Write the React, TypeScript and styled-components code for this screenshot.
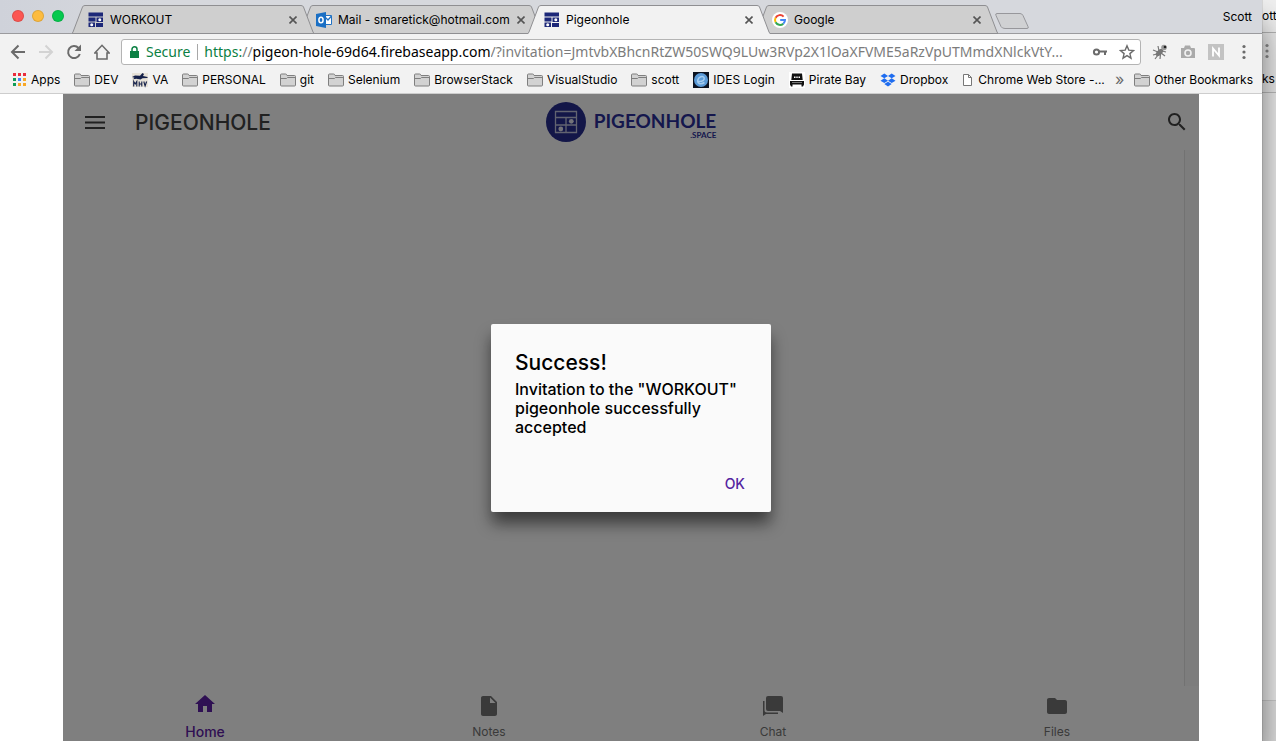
import React from 'react';
import styled, { createGlobalStyle, css } from 'styled-components';

const UI_FONT = `Inter, Roboto, "Liberation Sans", sans-serif`;

const GlobalStyle = createGlobalStyle`
  *, *::before, *::after { box-sizing: border-box; }
  body { margin: 0; background: #e4e4e4; font-family: ${UI_FONT}; color: #000; overflow: hidden; }
  button, input { font: inherit; color: inherit; border: 0; padding: 0; margin: 0; background: none; }
  button { cursor: pointer; }
  svg { display: block; flex: none; }
  a { color: inherit; text-decoration: none; }
  ul { list-style: none; margin: 0; padding: 0; }
`;

/* ---------- desktop ---------- */

const Desktop = styled.div`
  display: grid;
  grid-template-columns: minmax(0, 1fr) 14px;
  min-height: 100vh;
`;

const Window = styled.div`
  display: flex;
  flex-direction: column;
  position: relative;
  z-index: 1;
  background: #fff;
  box-shadow: 0 0 1px rgba(0, 0, 0, 0.5), 0 24px 32px rgba(0, 0, 0, 0.55);
`;

/* ---------- tab strip ---------- */

const TitleBar = styled.div`
  display: flex;
  height: 34px;
  background: linear-gradient(90deg, #cfd2da, #d6d8dd 12%, #d6d8dd);
  box-shadow: inset 0 -1px #9b9b9e;
`;

const Lights = styled.div`
  display: flex;
  gap: 8px;
  padding: 10px 8px 0 12px;
  width: 72px;
  flex: none;
`;

const Light = styled.button<{ $color: string }>`
  width: 12px;
  height: 12px;
  border-radius: 50%;
  background: ${p => p.$color};
  box-shadow: inset 0 0 0 1px rgba(0, 0, 0, 0.12);
`;

const Tabs = styled.div`
  display: flex;
  align-items: flex-end;
  flex: 1;
  min-width: 0;
`;

const TabBox = styled.div<{ $layer: number }>`
  display: flex;
  flex: 0 1 242px;
  min-width: 0;
  height: 29px;
  position: relative;
  z-index: ${p => p.$layer};
  & + & { margin-left: -14px; }
`;

const TabBody = styled.div<{ $active?: boolean }>`
  display: flex;
  align-items: center;
  flex: 1;
  min-width: 0;
  padding-left: 3px;
  border-top: 1px solid #8f8f92;
  border-bottom: 1px solid ${p => (p.$active ? '#f2f2f2' : '#8f8f92')};
  background: ${p => (p.$active ? '#f2f2f2' : '#cfcfcf')};
`;

const TabLabel = styled.button`
  flex: 1;
  display: flex;
  align-items: center;
  gap: 6px;
  min-width: 0;
  font-size: 12px;
  line-height: 16px;
  text-align: left;
  white-space: nowrap;
`;

const CloseButton = styled.button`
  display: grid;
  place-items: center;
  width: 16px;
  height: 16px;
`;

const NewTab = styled.button`
  height: 16px;
  margin: 0 0 5px -3px;
`;

const Profile = styled.button`
  align-self: flex-start;
  padding: 9px 10px 0 0;
  font-size: 12px;
  line-height: 16px;
`;

/* ---------- toolbar ---------- */

const Toolbar = styled.div`
  display: flex;
  align-items: center;
  height: 35px;
  padding: 0 10px;
  background: #f2f2f2;
`;

const NavButtons = styled.div`
  display: flex;
  gap: 12px;
  margin-right: 11px;
`;

const IconButton = styled.button`
  display: grid;
  place-items: center;
  width: 16px;
  height: 16px;
`;

const AddressBar = styled.form`
  display: flex;
  align-items: center;
  flex: 1;
  min-width: 0;
  height: 26px;
  padding: 0 5px 0 8px;
  border: 1px solid #b4b4b4;
  border-radius: 3px;
  background: #fff;
  font: 14px/20px "Noto Sans", "Open Sans", sans-serif;
  white-space: nowrap;
`;

const Secure = styled.button`
  display: flex;
  align-items: center;
  gap: 7px;
  padding-right: 7px;
  margin-right: 6px;
  color: #0b8043;
  border-right: 1px solid #a8a8a8;
  line-height: 16px;
`;

const Host = styled.label`
  color: #000;
`;

const Scheme = styled.span`
  color: #0b8043;
`;

const Slashes = styled.span`
  color: #7c7c7c;
`;

const PathInput = styled.input`
  flex: 1;
  min-width: 0;
  color: #7c7c7c;
  outline: 0;
`;

const BarActions = styled.div`
  display: flex;
  gap: 11px;
`;

const Extensions = styled.div`
  display: flex;
  gap: 12px;
  padding: 0 0 0 11px;
`;

/* ---------- bookmarks ---------- */

const BookmarkBar = styled.nav`
  display: flex;
  align-items: center;
  height: 25px;
  padding: 0 9px 2px 11px;
  background: #f2f2f2;
  border-bottom: 1px solid #cdcdcd;
  font-size: 12px;
  line-height: 16px;
`;

const BookmarkList = styled.ul`
  display: flex;
  justify-content: space-between;
  flex: 1;
  min-width: 0;
`;

const Bookmark = styled.a`
  display: flex;
  align-items: center;
  gap: 4px;
  white-space: nowrap;
`;

const More = styled.button`
  padding: 0 10px 2px 10px;
  color: #6a6a6a;
  font-size: 16px;
  line-height: 16px;
`;

/* ---------- app page ---------- */

const Page = styled.main`
  flex: 1;
  display: flex;
  padding: 0 5%;
`;

const AppFrame = styled.div`
  flex: 1;
  display: flex;
  flex-direction: column;
  position: relative;
  background: #fff;
`;

const AppHeader = styled.header`
  display: grid;
  grid-template-columns: 1fr auto 1fr;
  align-items: center;
  height: 56px;
  padding: 0 10px;
`;

const HeaderLeft = styled.div`
  display: flex;
  align-items: center;
  gap: 28px;
  padding: 2px 0 0 10px;
`;

const AppTitle = styled.h1`
  margin: 0;
  font-size: 21px;
  line-height: 26px;
  font-weight: 500;
  color: #424242;
`;

const AppIconButton = styled.button`
  justify-self: end;
  color: #424242;
`;

const Logo = styled.a`
  display: flex;
  align-items: center;
  gap: 8px;
  color: #2a2f9a;
`;

const LogoText = styled.span`
  display: flex;
  flex-direction: column;
  align-items: flex-end;
  padding-top: 9px;
  font-family: Lato, sans-serif;
  font-size: 19px;
  line-height: 16px;
  font-weight: 700;
`;

const LogoSub = styled.span`
  font-size: 8px;
  line-height: 12px;
`;

const Scroller = styled.section`
  flex: 1;
  display: flex;
  justify-content: flex-end;
`;

const ScrollTrack = styled.div`
  width: 15px;
  background: #fafafa;
  border-left: 1px solid #e4e4e4;
`;

const BottomNav = styled.nav`
  display: grid;
  grid-template-columns: repeat(4, 1fr);
  height: 55px;
`;

const NavItem = styled.a<{ $active?: boolean }>`
  display: flex;
  flex-direction: column;
  align-items: center;
  gap: 6px;
  padding-top: 8px;
  font-size: 12px;
  line-height: 16px;
  color: #757575;
  ${p => p.$active && css`
    font-size: 14px;
    font-weight: 500;
    padding-top: 6px;
    gap: 8px;
    color: #5e21a6;
  `}
`;

const Overlay = styled.div`
  position: absolute;
  inset: 0;
  display: grid;
  place-items: center;
  background: rgba(0, 0, 0, 0.5);
`;

const Dialog = styled.div`
  display: flex;
  flex-direction: column;
  width: 280px;
  min-height: 188px;
  padding: 26px 24px 16px;
  border-radius: 2px;
  background: #fafafa;
  box-shadow: 0 11px 15px -7px rgba(0, 0, 0, 0.2), 0 12px 16px rgba(0, 0, 0, 0.45);
`;

const DialogTitle = styled.h2`
  margin: 0 0 4px;
  font-size: 21px;
  line-height: 26px;
  font-weight: 500;
`;

const DialogText = styled.p`
  margin: 0;
  font-size: 16px;
  line-height: 19px;
  font-weight: 500;
`;

const OkButton = styled.button`
  align-self: flex-end;
  margin-top: auto;
  padding: 0 2px;
  font-size: 14px;
  line-height: 24px;
  font-weight: 500;
  color: #5424a0;
`;

/* ---------- window behind ---------- */

const BackWindow = styled.aside`
  display: flex;
  flex-direction: column;
  overflow: hidden;
  font-size: 12px;
  line-height: 16px;
  background: #e6e6e6;
`;

const BackTitle = styled.div`
  height: 33px;
  padding-top: 8px;
  background: #f0f0f0;
  border-bottom: 1px solid #b5b5b5;
`;

const BackBars = styled.div`
  display: flex;
  flex-direction: column;
  height: 60px;
  padding-top: 10px;
  gap: 12px;
  background: #ececec;
  border-bottom: 1px solid #bdbdbd;
`;

const BackPage = styled.div`
  flex: 1;
  background: #eeeeee;
`;

const BackFooter = styled.div`
  height: 41px;
  background: #e2e2e2;
  border-top: 1px solid #cccccc;
`;

/* ---------- icons ---------- */

const GRAY = '#6b6b6b';

const PigeonIcon = () => (
  <svg width="16" height="16" viewBox="0 0 16 16" fill="#1d2879">
    <path d="M.500 .500h14.500v4H.500zM.500 5.500h7v4h-7zM8.500 5.500H15v4.500H8.500zM.500 10.500h6.500V15H.500zM8 11h7v4H8z" />
    <circle cx="11.800" cy="7.700" r="1.500" fill="#fff" />
    <circle cx="3.700" cy="12.700" r="1.500" fill="#fff" />
  </svg>
);

const OutlookIcon = () => (
  <svg width="16" height="16" viewBox="0 0 16 16">
    <path d="M8 3.5h7.5v9H8z" fill="#fff" stroke="#2272c3" />
    <path d="M9 5l3 3 3.5-4" fill="none" stroke="#2272c3" strokeWidth="1.3" />
    <path d="M0 2l10-2v16L0 14z" fill="#1a6fc4" />
    <ellipse cx="5" cy="8" rx="2.1" ry="2.8" fill="none" stroke="#fff" strokeWidth="1.5" />
  </svg>
);

const GoogleIcon = () => (
  <svg width="16" height="16" viewBox="0 0 16 16">
    <circle cx="8" cy="8" r="8" fill="#fff" />
    <g fill="none" strokeWidth="2">
      <path d="M11.6 4.6A5 5 0 0 0 3.6 5.7" stroke="#ea4335" />
      <path d="M3.6 5.7a5 5 0 0 0 0 4.6" stroke="#fbbc05" />
      <path d="M3.6 10.3a5 5 0 0 0 7.7 1.4" stroke="#34a853" />
      <path d="M11.3 11.7A4.800 4.800 0 0 0 13 8H8.200" stroke="#4285f4" />
    </g>
  </svg>
);

const CloseIcon = () => (
  <svg width="8" height="8" viewBox="0 0 8 8">
    <path d="M.5.5l7 7M7.500.500l-7 7" stroke="#555" strokeWidth="1.600" />
  </svg>
);

const TabCap = ({ right, active }: { right?: boolean; active?: boolean }) => (
  <svg width="13" height="29" viewBox="0 0 13 29">
    <g transform={right ? 'matrix(-1 0 0 1 13 0)' : undefined}>
      <path d="M0 29L1 27L10.500 2Q11 .500 13 .500V29z" fill={active ? '#f2f2f2' : '#cfcfcf'} />
      <path d="M0 28.500L1 27L10.500 2Q11 .500 13 .500" fill="none" stroke="#8f8f92" />
      {!active && <path d="M0 28.500H13" stroke="#8f8f92" />}
    </g>
  </svg>
);

const FolderIcon = () => (
  <svg width="16" height="14" viewBox="0 0 16 14">
    <path d="M.5 12V2q0-1 1-1h4q1 0 1.300 1l.2.500H14.500q1 0 1 1V12q0 1-1 1h-13q-1 0-1-1z" fill="#d2d2d2" stroke="#7f7f7f" />
    <path d="M1 5.500h5.500l1-1H15" fill="none" stroke="#7f7f7f" />
  </svg>
);

const AppsIcon = () => (
  <svg width="16" height="16" viewBox="0 0 16 16">
    {['#ea2c3c', '#ea2c3c', '#ea2c3c', '#0f9d58', '#4285f4', '#f9a825', '#0f9d58', '#f9a825', '#f9a825'].map((c, i) => (
      <rect key={i} x={2 + (i % 3) * 5} y={1 + Math.floor(i / 3) * 5} width="3" height="3" fill={c} />
    ))}
  </svg>
);

const HorseIcon = () => (
  <svg width="16" height="16" viewBox="0 0 16 16">
    <path d="M0 1h16v14H0z" fill="#e7e2d8" />
    <path d="M0 5l3-1.500 5 .200 2.500-2.700 1.500 1-1 2 4.500 1v1l-5 .200-2 1.300-4-.700L1 7.300l1.500-1.500z" fill="#14204a" />
    <path d="M1.700 14.500v-5l1.500 2.500 1.600-2.500v5M7.200 9.500v5M9.800 9.500v5M7 12h3M11.800 9.500l1.300 4.500 1.500-4.500" fill="none" stroke="#14204a" strokeWidth="1.100" />
  </svg>
);

const IdesIcon = () => (
  <svg width="16" height="16" viewBox="0 0 16 16">
    <path d="M0 0h16v16H0z" fill="#0b1220" />
    <circle cx="8" cy="8" r="7" fill="#5b9bd8" />
    <path d="M4.500 9.500c6 .500 7.500-2 6.500-4S5.500 4.500 4.800 8s2.700 5 6.700 2.500" fill="none" stroke="#a5cdf0" strokeWidth="1.500" />
  </svg>
);

const ShipIcon = () => (
  <svg width="16" height="16" viewBox="0 0 16 16">
    <path d="M0 0h16v16H0z" fill="#fff" />
    <path d="M3 1.500h10l.700 6.500H2.300zM1 9h14v3.500l-1 2h-1.500v-2h-9v2H2l-1-2z" fill="#111" />
    <path d="M5 4.500h1.500V6H5zM9.500 4.500H11V6H9.500zM7.300 4.500h1.400V6H7.300z" fill="#fff" />
    <path d="M3 10.500h10" stroke="#777" />
  </svg>
);

const DropboxIcon = () => (
  <svg width="16" height="16" viewBox="0 0 16 16" fill="#1f6df0">
    <path d="M4.300 1.500L8 3.900 4.300 6.300.500 3.900zM11.700 1.500l3.800 2.400-3.800 2.400L8 3.900zM4.300 6.300L8 8.700l-3.700 2.400L.500 8.700zM11.700 6.300l3.800 2.400-3.800 2.400L8 8.700zM8 9.700l3.700 2.300L8 14.400 4.300 12z" />
  </svg>
);

const PageIcon = () => (
  <svg width="12" height="14" viewBox="0 0 12 14">
    <path d="M1.500 1.500h5l3 3V12.500h-8z" fill="#fff" stroke="#777" />
    <path d="M6.500 1.500v3h3" fill="none" stroke="#777" />
  </svg>
);

const Dots = () => (
  <svg width="16" height="16" viewBox="0 0 16 16" fill={GRAY}>
    <circle cx="8" cy="2.500" r="1.600" /><circle cx="8" cy="8" r="1.600" /><circle cx="8" cy="13.500" r="1.600" />
  </svg>
);

const EdgeDots = () => (
  <svg width="10" height="16" viewBox="0 0 10 16" fill="#8a8a8a">
    <circle cx="5" cy="2.500" r="1.600" /><circle cx="5" cy="8" r="1.600" /><circle cx="5" cy="13.500" r="1.600" />
  </svg>
);

const tabs = [
  { title: 'WORKOUT', icon: <PigeonIcon /> },
  { title: 'Mail - smaretick@hotmail.com', icon: <OutlookIcon /> },
  { title: 'Pigeonhole', icon: <PigeonIcon />, active: true },
  { title: 'Google', icon: <GoogleIcon /> },
];

const bookmarks = [
  { label: 'Apps', icon: <AppsIcon /> },
  { label: 'DEV', icon: <FolderIcon /> },
  { label: 'VA', icon: <HorseIcon /> },
  { label: 'PERSONAL', icon: <FolderIcon /> },
  { label: 'git', icon: <FolderIcon /> },
  { label: 'Selenium', icon: <FolderIcon /> },
  { label: 'BrowserStack', icon: <FolderIcon /> },
  { label: 'VisualStudio', icon: <FolderIcon /> },
  { label: 'scott', icon: <FolderIcon /> },
  { label: 'IDES Login', icon: <IdesIcon /> },
  { label: 'Pirate Bay', icon: <ShipIcon /> },
  { label: 'Dropbox', icon: <DropboxIcon /> },
  { label: 'Chrome Web Store -...', icon: <PageIcon /> },
];

const navItems = [
  { label: 'Home', path: 'M10 20v-6h4v6h5v-8h3L12 3 2 12h3v8z', active: true },
  { label: 'Notes', path: 'M6 2c-1.100 0-1.990.900-1.990 2L4 20c0 1.100.890 2 1.990 2H18c1.100 0 2-.900 2-2V8l-6-6H6zm7 7V3.500L18.500 9H13z' },
  { label: 'Chat', path: 'M7 2h13q2 0 2 2v15l-3-2H7q-2 0-2-2V4q0-2 2-2zM2 7h1.500v9q0 2.500 2.500 2.500h11v1.500H5L2 22z' },
  { label: 'Files', path: 'M10 4H4c-1.100 0-1.990.900-1.990 2L2 18c0 1.100.900 2 2 2h16c1.100 0 2-.900 2-2V8c0-1.100-.900-2-2-2h-8l-2-2z' },
];

export default function App() {
  return (
    <>
      <GlobalStyle />
      <Desktop>
        <Window>
          <TitleBar>
            <Lights>
              <Light $color="#fc5753" aria-label="Close window" />
              <Light $color="#fdbc40" aria-label="Minimize window" />
              <Light $color="#06c94f" aria-label="Zoom window" />
            </Lights>
            <Tabs>
              {tabs.map((t, i) => (
                <TabBox key={t.title} $layer={t.active ? tabs.length + 1 : tabs.length - i}>
                  <TabCap active={t.active} />
                  <TabBody $active={t.active}>
                    <TabLabel>{t.icon}{t.title}</TabLabel>
                    <CloseButton aria-label={`Close ${t.title}`}><CloseIcon /></CloseButton>
                  </TabBody>
                  <TabCap right active={t.active} />
                </TabBox>
              ))}
              <NewTab aria-label="New tab">
                <svg width="34" height="16" viewBox="0 0 34 16">
                  <path d="M2 .500H25q2 0 3 2l5 11q1 2-1 2H10q-3 0-4-2L1 2.500Q0 .500 2 .500z" fill="#d0d1d3" stroke="#97979b" />
                </svg>
              </NewTab>
            </Tabs>
            <Profile>Scott</Profile>
          </TitleBar>

          <Toolbar>
            <NavButtons>
              <IconButton aria-label="Back">
                <svg width="16" height="16" viewBox="0 0 16 16" fill="none" stroke={GRAY} strokeWidth="2"><path d="M15 8H2.500M8.500 1.500L2 8l6.500 6.500" /></svg>
              </IconButton>
              <IconButton aria-label="Forward">
                <svg width="16" height="16" viewBox="0 0 16 16" fill="none" stroke="#d3d3d3" strokeWidth="2"><path d="M1 8h12.500M7.500 1.500L14 8l-6.500 6.500" /></svg>
              </IconButton>
              <IconButton aria-label="Reload">
                <svg width="16" height="16" viewBox="0 0 16 16"><path d="M13.800 10A6 6 0 1 1 12.500 4" fill="none" stroke={GRAY} strokeWidth="2" /><path d="M15 .500v6.500H8.500z" fill={GRAY} /></svg>
              </IconButton>
              <IconButton aria-label="Home page">
                <svg width="16" height="16" viewBox="0 0 16 16" fill="none" stroke={GRAY} strokeWidth="1.600"><path d="M.800 9L8 1.300 15.200 9H13v6H3V9z" /></svg>
              </IconButton>
            </NavButtons>
            <AddressBar onSubmit={e => e.preventDefault()}>
              <Secure type="button">
                <svg width="9" height="12" viewBox="0 0 9 12"><path d="M0 5h9v7H0z" fill="#0b8043" /><path d="M2 5.500V3.300a2.500 2.500 0 0 1 5 0V5.500" fill="none" stroke="#0b8043" strokeWidth="1.500" /></svg>
                Secure
              </Secure>
              <Host htmlFor="url"><Scheme>https:</Scheme><Slashes>//</Slashes>pigeon-hole-69d64.firebaseapp.com</Host>
              <PathInput id="url" readOnly value="/?invitation=JmtvbXBhcnRtZW50SWQ9LUw3RVp2X1lOaXFVME5aRzVpUTMmdXNlckVtY..." />
              <BarActions>
                <IconButton type="button" aria-label="Saved passwords">
                  <svg width="16" height="16" viewBox="0 0 16 16" fill="none" stroke={GRAY} strokeWidth="2"><circle cx="4.500" cy="8" r="2.600" /><path d="M7 7.500h8M13 8v3" /></svg>
                </IconButton>
                <IconButton type="button" aria-label="Bookmark this page">
                  <svg width="16" height="16" viewBox="0 0 16 16" fill="none" stroke={GRAY} strokeWidth="1.400"><path d="M8 1.800l1.800 4.300 4.700.400-3.600 3.100 1.100 4.600L8 11.700l-4 2.500 1.100-4.600L1.500 6.500l4.700-.400z" /></svg>
                </IconButton>
              </BarActions>
            </AddressBar>
            <Extensions>
              <IconButton aria-label="Firebug extension">
                <svg width="16" height="16" viewBox="0 0 16 16"><ellipse cx="7.500" cy="8.500" rx="4.500" ry="2.500" transform="rotate(-45 7.500 8.500)" fill="#777" /><path d="M1 6l5 2M1 11l4-1M3 15l3-4M8 15l.500-5M13 12l-4-3M6 2l1 5M14 8l-4-1" stroke="#777" strokeWidth="1.200" /><circle cx="12" cy="3.500" r="2.800" fill="#999" /><circle cx="13" cy="3" r="1.300" fill="#222" /></svg>
              </IconButton>
              <IconButton aria-label="Screenshot extension">
                <svg width="16" height="16" viewBox="0 0 16 16"><path d="M1 4h3l1-2.500h5L11 4h3q1 0 1 1v9H1z" fill="#aaa" /><circle cx="8" cy="9" r="3" fill="none" stroke="#f2f2f2" strokeWidth="1.600" /></svg>
              </IconButton>
              <IconButton aria-label="N extension">
                <svg width="16" height="16" viewBox="0 0 16 16"><rect width="16" height="16" fill="#c3c3c3" /><path d="M5 12.500V4.500l6 7V3.500" fill="none" stroke="#fff" strokeWidth="1.800" /></svg>
              </IconButton>
              <IconButton aria-label="Menu"><Dots /></IconButton>
            </Extensions>
          </Toolbar>

          <BookmarkBar aria-label="Bookmarks">
            <BookmarkList>
              {bookmarks.map(b => (
                <li key={b.label}><Bookmark href="#">{b.icon}{b.label}</Bookmark></li>
              ))}
            </BookmarkList>
            <More aria-label="More bookmarks">»</More>
            <Bookmark href="#"><FolderIcon />Other Bookmarks</Bookmark>
          </BookmarkBar>

          <Page>
            <AppFrame>
              <AppHeader>
                <HeaderLeft>
                  <AppIconButton aria-label="Menu">
                    <svg width="24" height="24" viewBox="0 0 24 24" fill="currentColor"><path d="M2 5h20v2H2zM2 10.500h20v2H2zM2 16h20v2H2z" /></svg>
                  </AppIconButton>
                  <AppTitle>PIGEONHOLE</AppTitle>
                </HeaderLeft>
                <Logo href="#">
                  <svg width="40" height="40" viewBox="0 0 40 40">
                    <circle cx="20" cy="20" r="20" fill="#262d90" />
                    <path d="M9.500 9.500h21v21h-21zM9.500 15.500h21M9.500 23h21M20 15.500v15" fill="none" stroke="#c4c6e0" strokeWidth="1.300" />
                    <circle cx="25.300" cy="19.300" r="2.400" fill="#e6e6f2" />
                    <circle cx="14.800" cy="27" r="2.400" fill="#e6e6f2" />
                  </svg>
                  <LogoText>PIGEONHOLE<LogoSub>.SPACE</LogoSub></LogoText>
                </Logo>
                <AppIconButton aria-label="Search">
                  <svg width="24" height="24" viewBox="0 0 24 24" fill="currentColor"><path d="M15.500 14h-.790l-.280-.270C15.410 12.590 16 11.110 16 9.500 16 5.910 13.090 3 9.500 3S3 5.910 3 9.500 5.910 16 9.500 16c1.610 0 3.090-.590 4.230-1.570l.270.280v.790l5 4.990L20.490 19l-4.990-5zm-6 0C7.010 14 5 11.990 5 9.500S7.010 5 9.500 5 14 7.010 14 9.500 11.990 14 9.500 14z" /></svg>
                </AppIconButton>
              </AppHeader>
              <Scroller><ScrollTrack /></Scroller>
              <BottomNav aria-label="Sections">
                {navItems.map(n => (
                  <NavItem key={n.label} href="#" $active={n.active}>
                    <svg width="24" height="24" viewBox="0 0 24 24" fill="currentColor"><path d={n.path} /></svg>
                    {n.label}
                  </NavItem>
                ))}
              </BottomNav>
              <Overlay>
                <Dialog role="dialog" aria-modal="true" aria-labelledby="dialog-title">
                  <DialogTitle id="dialog-title">Success!</DialogTitle>
                  <DialogText>Invitation to the "WORKOUT" pigeonhole successfully accepted</DialogText>
                  <OkButton>OK</OkButton>
                </Dialog>
              </Overlay>
            </AppFrame>
          </Page>
        </Window>
        <BackWindow>
          <BackTitle>ott</BackTitle>
          <BackBars>
            <EdgeDots />
            <span>ks</span>
          </BackBars>
          <BackPage />
          <BackFooter />
        </BackWindow>
      </Desktop>
    </>
  );
}
